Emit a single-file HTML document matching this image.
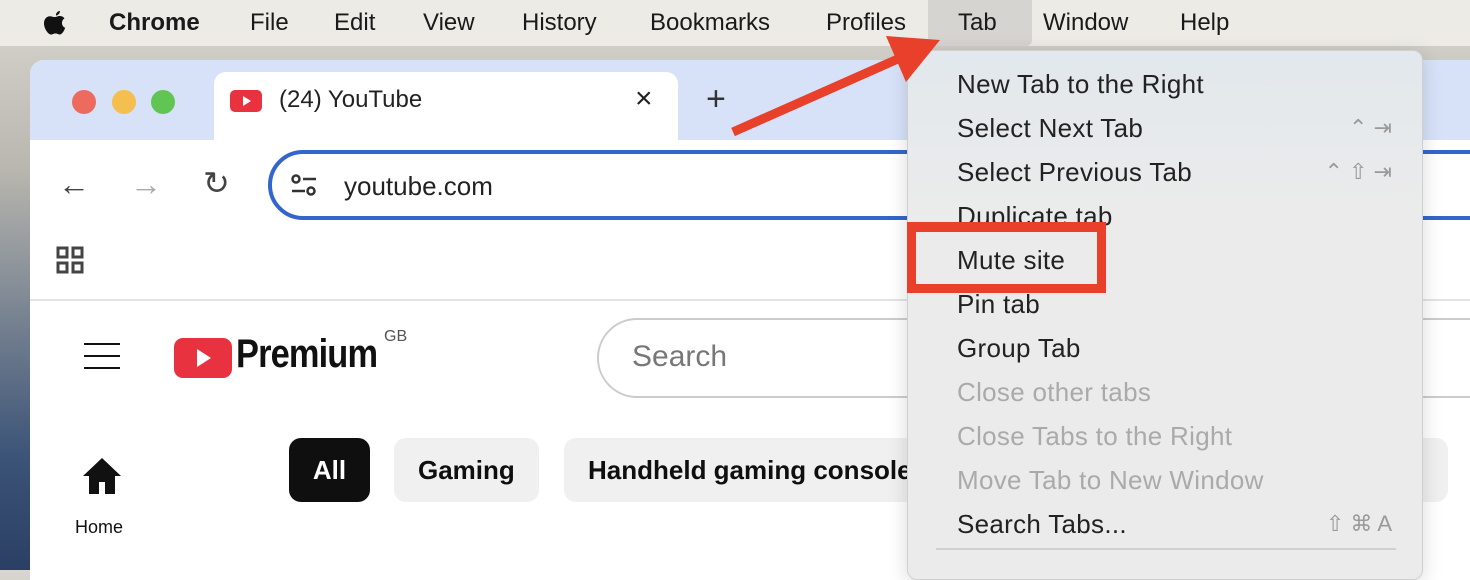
<!DOCTYPE html>
<html><head><meta charset="utf-8"><style>
*{margin:0;padding:0;box-sizing:border-box}
body{width:1470px;height:570px;overflow:hidden;position:relative;font-family:"Liberation Sans",sans-serif;background:linear-gradient(180deg,#d8d6cf 0%,#b8b6ae 30%,#6d7a8c 60%,#3c5478 80%,#2a3f63 100%)}
.abs{position:absolute}
.menubar{left:0;top:0;width:1470px;height:46px;background:#ecebe6}
.mb{position:absolute;top:9px;font-size:24px;color:#1a1a1a}
.win{left:30px;top:60px;width:1460px;height:520px;background:#fff;border-radius:14px 0 0 0;overflow:hidden}
.strip{left:0;top:0;width:100%;height:80px;background:#d7e2f8}
.dot{position:absolute;top:30px;width:24px;height:24px;border-radius:50%}
.mi{position:absolute;left:49px;font-size:26px;color:#222;white-space:nowrap;letter-spacing:.3px}
.dis{color:#aaa}
.sc{position:absolute;right:30px;font-size:22px;color:#9a9a9a}
.chip{position:absolute;top:378px;height:64px;border-radius:12px;background:#f0f0f0;font-size:26px;font-weight:bold;color:#0f0f0f;line-height:64px;padding:0 24px}
</style></head><body>
<div class="abs menubar">
 <svg class="abs" style="left:40px;top:8px" width="30" height="32" viewBox="0 0 30 32"><path fill="#111" d="M20 3c0 2-1.6 4.3-4 4.6-.3-2.3 1.6-4.5 4-4.6zM15 9c1.5 0 3-1.2 5-1 1 0 3.2.4 4.5 2.4-3.8 2.4-3 8 .7 9.4-1 2.8-3 6.6-5.300 6.7-1.8 0-2.3-1-4.4-1-2.1 0-2.7 1-4.4 1C8.5 26.6 4 21 4 15.2 4 10.6 7 8.3 9.8 8.2c1.9 0 3.6 1 5.2.8z"/></svg>
 <div class="mb" style="left:109px;font-weight:bold">Chrome</div>
 <div class="mb" style="left:250px">File</div>
 <div class="mb" style="left:334px">Edit</div>
 <div class="mb" style="left:423px">View</div>
 <div class="mb" style="left:522px">History</div>
 <div class="mb" style="left:650px">Bookmarks</div>
 <div class="mb" style="left:826px">Profiles</div>
 <div class="abs" style="left:928px;top:0;width:104px;height:46px;background:#d5d4d0;border-radius:0 0 6px 6px"></div>
 <div class="mb" style="left:958px">Tab</div>
 <div class="mb" style="left:1043px">Window</div>
 <div class="mb" style="left:1180px">Help</div>
</div>
<div class="abs win">
 <div class="abs strip"></div>
 <div class="dot" style="left:42px;background:#ec6a5e"></div>
 <div class="dot" style="left:82px;background:#f4bf4f"></div>
 <div class="dot" style="left:121px;background:#61c554"></div>
 <div class="abs" style="left:184px;top:12px;width:464px;height:70px;background:#fff;border-radius:12px 12px 0 0"></div>
 <svg class="abs" style="left:200px;top:30px" width="32" height="22"><rect width="32" height="22" rx="5" fill="#e8323f"/><path d="M13 6l8 5-8 5z" fill="#fff"/></svg>
 <div class="abs" style="left:249px;top:26px;font-size:24px;color:#222">(24) YouTube</div>
 <div class="abs" style="left:605px;top:22px;font-size:30px;color:#222">×</div>
 <div class="abs" style="left:676px;top:20px;font-size:34px;color:#333">+</div>
 <div class="abs" style="left:0;top:80px;width:100%;height:160px;background:#fff"></div>
 <div class="abs" style="left:28px;top:106px;font-size:32px;color:#444">←</div>
 <div class="abs" style="left:100px;top:106px;font-size:32px;color:#aaa">→</div>
 <div class="abs" style="left:173px;top:104px;font-size:32px;color:#444">↻</div>
 <div class="abs" style="left:238px;top:90px;width:1300px;height:70px;border:4px solid #3366cc;border-radius:35px"></div>
 <svg class="abs" style="left:260px;top:113px" width="28" height="24" fill="none" stroke="#333" stroke-width="2.5"><circle cx="6" cy="6" r="3.5"/><line x1="13" y1="6" x2="26" y2="6"/><line x1="2" y1="18" x2="15" y2="18"/><circle cx="21" cy="18" r="3.5"/></svg>
 <div class="abs" style="left:314px;top:111px;font-size:26px;color:#222">youtube.com</div>
 <svg class="abs" style="left:26px;top:186px" width="28" height="28" fill="none" stroke="#444" stroke-width="3"><rect x="2" y="2" width="9" height="9"/><rect x="17" y="2" width="9" height="9"/><rect x="2" y="17" width="9" height="9"/><rect x="17" y="17" width="9" height="9"/></svg>
 <div class="abs" style="left:0;top:239px;width:100%;height:2px;background:#e3e3e3"></div>
 <div class="abs" style="left:54px;top:283px;width:36px;height:2px;background:#111;box-shadow:0 12px 0 #111,0 24px 0 #111"></div>
 <svg class="abs" style="left:144px;top:278px" width="58" height="40"><rect width="58" height="40" rx="9" fill="#e8323f"/><path d="M23 11l14 9-14 9z" fill="#fff"/></svg>
 <div class="abs" style="left:206px;top:272px;font-size:40px;font-weight:bold;color:#111;transform:scaleX(.86);transform-origin:left;letter-spacing:-1px">Premium</div>
 <div class="abs" style="left:354px;top:268px;font-size:16px;color:#555">GB</div>
 <div class="abs" style="left:567px;top:258px;width:950px;height:80px;border:2px solid #ccc;border-radius:40px"></div>
 <div class="abs" style="left:602px;top:280px;font-size:30px;color:#777">Search</div>
 <svg class="abs" style="left:51px;top:396px" width="42" height="40"><path d="M21 2L2 20h6v18h10V26h6v12h10V20h6z" fill="#111"/></svg>
 <div class="abs" style="left:45px;top:457px;font-size:18px;color:#111">Home</div>
 <div class="chip" style="left:259px;background:#0f0f0f;color:#fff;width:81px;padding:0;text-align:center">All</div>
 <div class="chip" style="left:364px;width:145px">Gaming</div>
 <div class="chip" style="left:534px;width:884px">Handheld gaming console</div>
</div>
<div class="abs" style="left:907px;top:50px;width:516px;height:530px;background:linear-gradient(180deg,#e2e8ed 0%,#ebebeb 30%,#ebebeb 100%);border:1px solid #cfcfcf;border-radius:10px;box-shadow:0 4px 20px rgba(0,0,0,.15)">
 <div class="mi" style="top:18px">New Tab to the Right</div>
 <div class="mi" style="top:62px">Select Next Tab</div><div class="sc" style="top:64px">⌃ ⇥</div>
 <div class="mi" style="top:106px">Select Previous Tab</div><div class="sc" style="top:108px">⌃ ⇧ ⇥</div>
 <div class="mi" style="top:150px">Duplicate tab</div>
 <div class="mi" style="top:194px">Mute site</div>
 <div class="mi" style="top:238px">Pin tab</div>
 <div class="mi" style="top:282px">Group Tab</div>
 <div class="mi dis" style="top:326px">Close other tabs</div>
 <div class="mi dis" style="top:370px">Close Tabs to the Right</div>
 <div class="mi dis" style="top:414px">Move Tab to New Window</div>
 <div class="mi" style="top:458px">Search Tabs...</div><div class="sc" style="top:460px">⇧ ⌘ A</div>
 <div class="abs" style="left:28px;top:497px;width:460px;height:2px;background:#d0d0d0"></div>
</div>
<div class="abs" style="left:907px;top:222px;width:199px;height:71px;border:9px solid #e8402a;border-top-width:10px"></div>
<svg class="abs" style="left:0;top:0" width="1470" height="570"><line x1="733" y1="132" x2="900" y2="58" stroke="#e8402a" stroke-width="9"/><path d="M940 40L886 36 906 82z" fill="#e8402a"/></svg>
</body></html>
